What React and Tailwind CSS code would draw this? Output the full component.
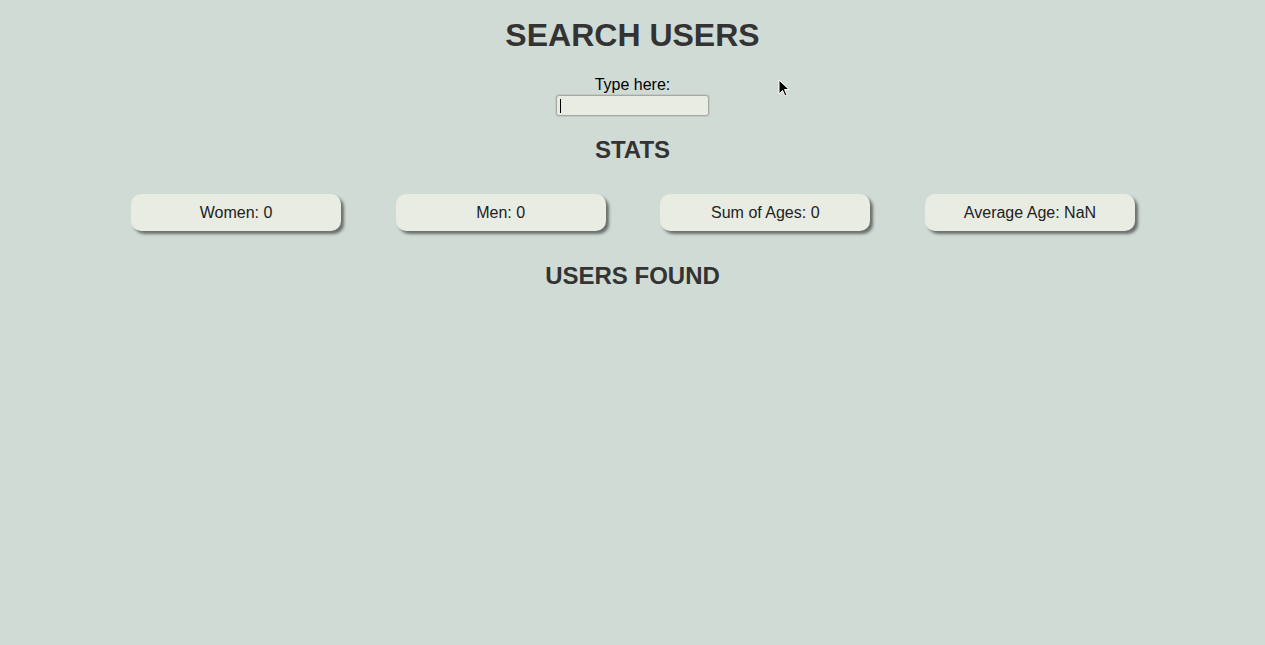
export default function App() {
  const stats = ["Women: 0", "Men: 0", "Sum of Ages: 0", "Average Age: NaN"];
  return (
    <div
      className="relative min-h-[645px] w-full bg-[#d0dbd5] text-[#333]"
      style={{ fontFamily: '"Liberation Sans", Arial, sans-serif' }}
    >
      <div className="flex flex-col items-center pt-[17px]">
        <h1 className="text-[32px] leading-[37px] font-bold text-[#333]">SEARCH USERS</h1>
        <label className="mt-[22px] text-[16px] leading-[18px] text-black">Type here:</label>
        <div className="mt-[1px] h-[21px] w-[153px] rounded-[3px] border border-[#a6a8a4] bg-[#e8ece2] shadow-[0_0_0_1px_#c4c9c5] flex items-center pl-[3px]">
          <div className="h-[14px] w-px bg-black" />
        </div>
        <h2 className="mt-[20px] text-[24px] leading-[28px] font-bold text-[#333]">STATS</h2>
        <div className="mt-[30px] flex w-[1005px] justify-between pl-[1px]">
          {stats.map((s) => (
            <div
              key={s}
              className="flex h-[37px] w-[210px] items-center justify-center rounded-[10px] bg-[#e8ece2] text-[16px] text-[#222] shadow-[3px_3px_3px_#6b706c]"
            >
              {s}
            </div>
          ))}
        </div>
        <h2 className="mt-[31px] text-[24px] leading-[28px] font-bold text-[#333]">USERS FOUND</h2>
      </div>
      <svg
        className="absolute left-[778px] top-[79px]"
        width="12"
        height="19"
        viewBox="0 0 12 19"
      >
        <path d="M1 1 L1 15 L4.5 11.5 L7 17 L9 16 L6.5 10.5 L11 10.5 Z" fill="black" stroke="white" strokeWidth="1" strokeLinejoin="round" />
      </svg>
    </div>
  );
}
